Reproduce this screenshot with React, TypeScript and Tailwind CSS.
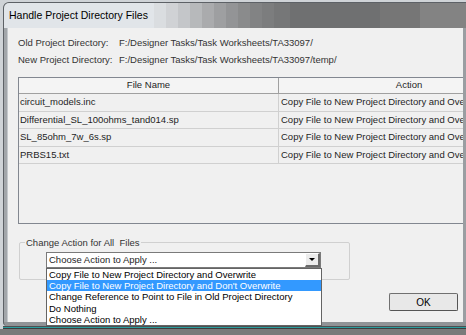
const files = [
  "circuit_models.inc",
  "Differential_SL_100ohms_tand014.sp",
  "SL_85ohm_7w_6s.sp",
  "PRBS15.txt",
];

const options = [
  "Copy File to New Project Directory and Overwrite",
  "Copy File to New Project Directory and Don't Overwrite",
  "Change Reference to Point to File in Old Project Directory",
  "Do Nothing",
  "Choose Action to Apply ...",
];

// title bar shading, light on the left and darkening to the right
const shades = [
  "w-[12px] bg-[#dadde0]",
  "w-[12px] bg-[#d0d2d5]",
  "w-[12px] bg-[#c4c6c9]",
  "w-[12px] bg-[#b7b9bb]",
  "w-[12px] bg-[#aaabad]",
  "w-[12px] bg-[#9e9fa1]",
  "w-[12px] bg-[#939496]",
  "w-[12px] bg-[#8a8b8c]",
  "w-[12px] bg-[#828384]",
  "w-[12px] bg-[#7c7d7e]",
  "w-[16px] bg-[#767778]",
  "w-[90px] bg-[#6f7071]",
  "w-[40px] bg-[#767676]",
  "flex-1 bg-[#838383]",
];

export default function App() {
  return (
    <div className="w-[466px] h-[335px] overflow-hidden bg-[#cfd3d7] font-['Liberation_Sans',Arial,sans-serif] text-[#1e1e1e]">
      <div className="ml-[3px] mt-[2px] w-[480px] flex flex-col">
        {/* Title bar */}
        <div className="flex h-[26px] border border-b-0 border-[#5d6166] rounded-tl-[6px] overflow-hidden bg-[#737475]">
          <div className="w-[150px] shrink-0 flex items-center pl-[5px] bg-[#e1e5e9] text-[10.5px] text-black">
            Handle Project Directory Files
          </div>
          {shades.map((s, i) => (
            <div key={i} className={s} />
          ))}
        </div>

        {/* Body */}
        <div className="flex border-l border-[#5d6166]">
          <div className="w-[4px] bg-[#a2a6aa] border-r border-[#c4c8cc]" />

          <div className="relative w-[455px] h-[294px] flex flex-col bg-[#f0f0f0] text-[9.5px] z-10">
            {/* Directories */}
            <div className="pt-[7px] pl-[10px] text-[#333]">
              <div className="flex h-[17px] items-center">
                <span className="w-[101px]">Old Project Directory:</span>
                <span>F:/Designer Tasks/Task Worksheets/TA33097/</span>
              </div>
              <div className="flex h-[17px] items-center">
                <span className="w-[101px]">New Project Directory:</span>
                <span>F:/Designer Tasks/Task Worksheets/TA33097/temp/</span>
              </div>
            </div>

            {/* Table */}
            <div className="mt-[8px] ml-[10px] w-[445px] h-[147px] overflow-hidden border border-r-0 border-[#828790] bg-[#f0f0f0]">
              <div className="w-[520px]">
                <div className="grid grid-cols-[260px_260px] h-[16px] border-b border-[#a0a0a0] bg-[#f4f4f4]">
                  <div className="flex items-center justify-center border-r border-[#a0a0a0]">File Name</div>
                  <div className="flex items-center justify-center">Action</div>
                </div>
                {files.map((f) => (
                  <div key={f} className="grid grid-cols-[260px_260px] h-[17.5px] border-b border-[#d0d0d0]">
                    <div className="flex items-center pl-[1px] border-r border-[#d0d0d0]">{f}</div>
                    <div className="flex items-center pl-[2px] whitespace-nowrap">
                      Copy File to New Project Directory and Overwrite
                    </div>
                  </div>
                ))}
              </div>
            </div>

            {/* Group box */}
            <div className="relative mt-[18px] ml-[11px] w-[331px] border border-[#d0d0d0] rounded-[2px] pt-[9px] pl-[26px] pb-[11px]">
              <span className="absolute left-[5px] -top-[6px] px-[1px] leading-[11px] bg-[#f0f0f0] whitespace-pre text-[#333]">
                Change Action for All  Files
              </span>
              <div className="relative w-[275px] h-[16px] flex items-center border border-[#7a7a7a] bg-white">
                <span className="pl-[2px]">Choose Action to Apply ...</span>
                <div className="ml-auto w-[15px] h-full flex items-center justify-center bg-[#ececec] border-t border-l border-t-white border-l-white border-r-2 border-b-2 border-r-[#6a6a6a] border-b-[#6a6a6a]">
                  <div className="w-0 h-0 border-l-[3px] border-r-[3px] border-t-[3px] border-l-transparent border-r-transparent border-t-black" />
                </div>

                {/* Open list */}
                <div className="absolute left-[-1px] top-[15px] w-[276px] border border-[#646464] bg-white z-20 text-black">
                  {options.map((o, i) => (
                    <div
                      key={o}
                      className={
                        i === 1
                          ? "h-[11.2px] leading-[11.2px] pl-[2px] whitespace-nowrap bg-[#3399ff] text-white"
                          : "h-[11.2px] leading-[11.2px] pl-[2px] whitespace-nowrap"
                      }
                    >
                      {o}
                    </div>
                  ))}
                </div>
              </div>
            </div>

            {/* OK */}
            <button className="self-end mr-[5px] mt-[13px] w-[69px] h-[18px] flex items-center justify-center border border-[#707070] border-r-[#555] border-b-[#555] rounded-[2px] bg-[#e8e8e8] text-[10px] text-black">
              OK
            </button>
          </div>

          <div className="flex-1 bg-[#9a9ea2]" />
        </div>

        {/* Bottom frame */}
        <div className="h-[4px] bg-[#909396] border-l border-[#5d6166] rounded-bl-[4px]" />
        <div className="h-[1px] bg-[#4d4f51]" />
        <div className="h-[1px] bg-[#2a9d9d]" />
        <div className="h-[1px] bg-[#3c3c3c]" />
      </div>
      <div className="h-[10px] bg-[#7a7a7a]" />
    </div>
  );
}
